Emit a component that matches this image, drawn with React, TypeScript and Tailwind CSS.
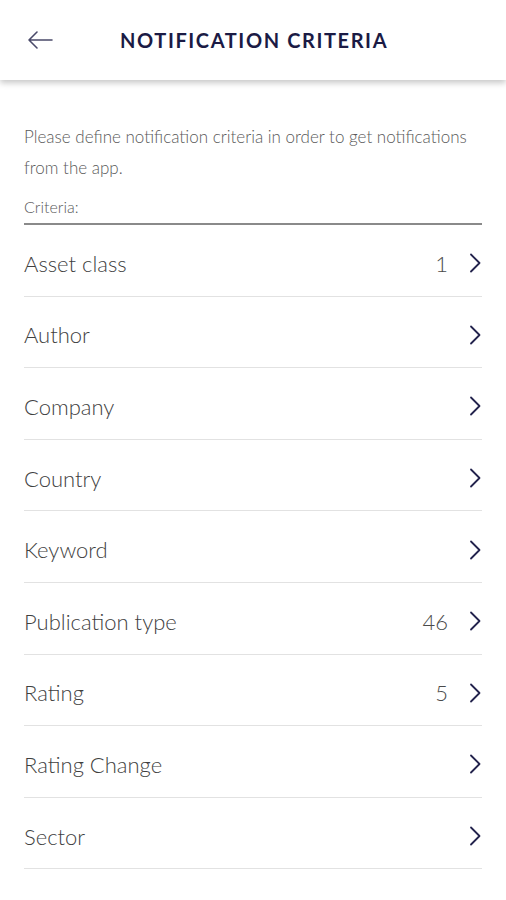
import React from 'react';

const criteria: { label: string; count?: string }[] = [
  { label: 'Asset class', count: '1' },
  { label: 'Author' },
  { label: 'Company' },
  { label: 'Country' },
  { label: 'Keyword' },
  { label: 'Publication type', count: '46' },
  { label: 'Rating', count: '5' },
  { label: 'Rating Change' },
  { label: 'Sector' },
];

const Chevron = () => (
  <svg width="14" height="22" viewBox="0 0 14 22" fill="none" className="shrink-0">
    <path d="M3 2.5 L11.5 11 L3 19.5" stroke="#23234d" strokeWidth="1.8" strokeLinecap="round" strokeLinejoin="round" />
  </svg>
);

const App = () => {
  return (
    <div className="min-h-[900px] w-[506px] bg-white font-['Lato','Noto_Sans',sans-serif]">
      {/* Header */}
      <div className="relative z-10 flex h-20 items-center bg-white shadow-[0_3px_6px_rgba(0,0,0,0.22)]">
        <div className="flex w-[120px] items-center pl-[27px]">
          <svg width="26" height="20" viewBox="0 0 26 20" fill="none">
            <path d="M25 10 H2 M10 2 L2 10 L10 18" stroke="#4a4a6a" strokeWidth="1.6" strokeLinecap="round" strokeLinejoin="round" />
          </svg>
        </div>
        <h1 className="text-[20px] font-bold tracking-[1.6px] text-[#1b1b45]">NOTIFICATION CRITERIA</h1>
      </div>

      {/* Body */}
      <div className="px-6 pt-[41px]">
        <p className="text-[17px] font-light leading-[31px] text-[#5a5a5a]">
          Please define notification criteria in order to get notifications from the app.
        </p>
        <div className="mt-[14px] border-b-2 border-[#8a8a8a] pb-[6px] text-[16px] font-light leading-[20px] text-[#5a5a5a]">
          Criteria:
        </div>

        <ul>
          {criteria.map((c) => (
            <li
              key={c.label}
              className="flex h-[71.6px] items-center border-b border-[#e2e2e2] pt-[6px]"
            >
              <span className="flex-1 text-[22px] font-light text-[#3f3f3f]">{c.label}</span>
              {c.count && (
                <span className="mr-[20px] text-[22px] font-light text-[#4a4a4a]">{c.count}</span>
              )}
              <Chevron />
            </li>
          ))}
        </ul>
      </div>
    </div>
  );
};

export default App;
